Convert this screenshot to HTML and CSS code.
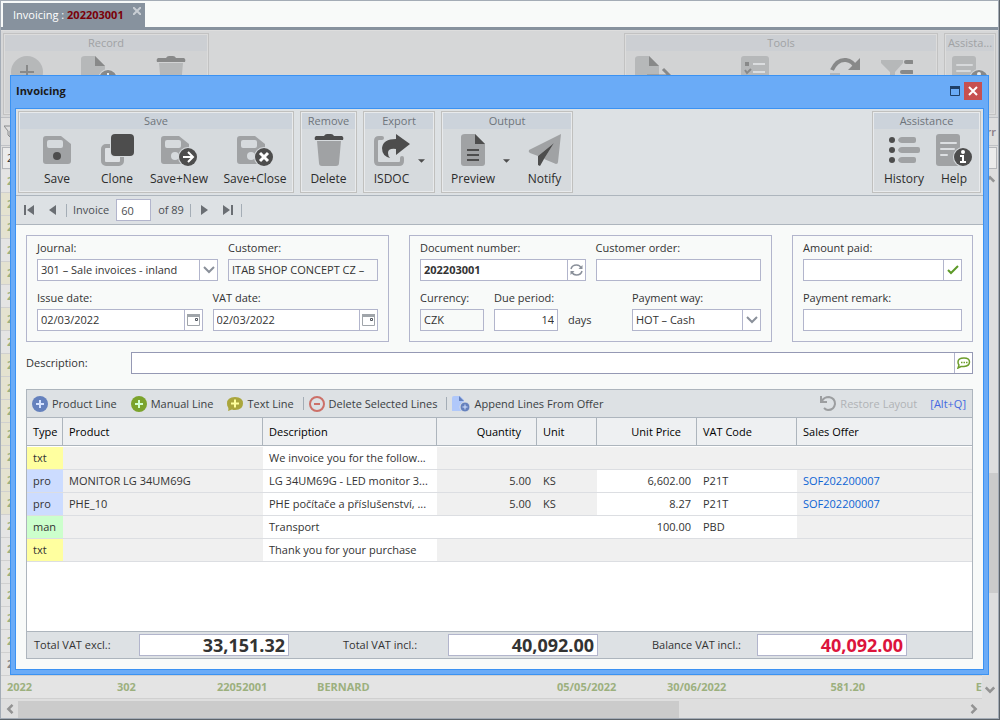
FILE: index.html
```html
<!DOCTYPE html>
<html lang="en">
<head>
  <meta charset="UTF-8">
  <meta name="viewport" content="width=device-width, initial-scale=1.0">
  <title>Invoicing</title>
  <link rel="stylesheet" href="styles.css">
</head>
<body>
  <!-- Shared icons -->
  <svg class="icon-defs" width="0" height="0" aria-hidden="true">
    <symbol id="i-disk" viewBox="0 0 32 32">
      <path fill="#a0a2a4" fill-rule="evenodd" d="M5 2h15l10 8v17q0 3-3 3H5q-3 0-3-3V5q0-3 3-3zM8 6q-2 0-2 2v4q0 2 2 2h12q2 0 2-2V8q0-2-2-2z"/>
    </symbol>
    <symbol id="i-doc" viewBox="0 0 32 32">
      <path fill="#a0a2a4" d="M4 0h10l10 10v19q0 3-3 3H3q-3 0-3-3V3q0-3 4-3z"/>
      <path fill="#4d4d4d" d="M14 0l10 10H14z"/>
    </symbol>
    <symbol id="i-trash" viewBox="0 0 32 32">
      <path fill="#a0a2a4" d="M4 7h24l-2 22q0 3-3 3H9q-3 0-3-3z"/>
      <path fill="#4d4d4d" d="M3 2h8q1-2 3-2h4q2 0 3 2h8q2 1 1 4H2q-1-3 1-4z"/>
    </symbol>
    <symbol id="i-help" viewBox="0 0 36 32">
      <rect width="24" height="32" rx="3" fill="#a0a2a4"/>
      <path stroke="#dcdfe2" stroke-width="2" stroke-linecap="round" d="M5 9h15M5 15h13M5 21h6"/>
      <circle cx="27" cy="23" r="10" fill="#d6dadd"/>
      <circle cx="27" cy="23" r="9" fill="#4d4d4d"/>
      <circle cx="27" cy="18" r="2" fill="#fff"/>
      <path fill="none" stroke="#fff" stroke-width="2" d="M24 22h3v6M24 28h6"/>
    </symbol>
    <symbol id="i-chevron" viewBox="0 0 12 8">
      <path fill="none" stroke="#8a909a" stroke-width="2" d="M1 1l5 5 5-5"/>
    </symbol>
    <symbol id="i-calendar" viewBox="0 0 13 12">
      <path fill="#fff" stroke="#a0a5aa" d="M.5.5h12v11H.5z"/>
      <path fill="#a0a5aa" d="M0 0h13v3H0z"/>
      <path fill="#fff" stroke="#50565e" d="M8.500 4.500h2v2h-2z"/>
    </symbol>
  </svg>

  <!-- Invoice list behind the dialog -->
  <div class="window">
    <div class="tabs">
      <div class="tab">
        <span>Invoicing : <b>202203001</b></span>
        <button class="tab-close" aria-label="Close tab"><svg width="8" height="8" viewBox="0 0 8 8"><path stroke="#c9ced4" stroke-width="2" d="M0 0l8 8M8 0L0 8"/></svg></button>
      </div>
    </div>

    <div class="ribbon back-ribbon">
      <div class="group back-record">
        <h2>Record</h2>
        <div class="back-icons">
          <svg width="32" height="32" viewBox="0 0 32 32"><circle cx="16" cy="16" r="16" fill="#a0a2a4"/><path stroke="#4d4d4d" stroke-width="2" d="M9 16h14M16 9v14"/></svg>
          <svg width="36" height="32" viewBox="0 0 36 32"><use href="#i-doc" width="32" height="32"/><circle cx="27" cy="23" r="10" fill="#dadcde"/><circle cx="27" cy="23" r="9" fill="#4d4d4d"/><path stroke="#fff" stroke-width="2" d="M27 17v11"/></svg>
          <svg width="32" height="32"><use href="#i-trash"/></svg>
        </div>
      </div>
      <div class="group back-tools">
        <h2>Tools</h2>
        <div class="back-icons">
          <svg width="36" height="32" viewBox="0 0 36 32"><use href="#i-doc" width="32" height="32"/><path fill="none" stroke="#4d4d4d" stroke-width="3" d="M12 20h22M28 13l7 7-7 7"/></svg>
          <svg width="28" height="32" viewBox="0 0 28 32"><rect width="28" height="32" rx="3" fill="#a0a2a4"/><rect x="4" y="6" width="4" height="4" fill="#4d4d4d"/><path fill="none" stroke="#4d4d4d" stroke-width="2" d="M4 14l2 3 4-4"/><path stroke="#e4e6e8" stroke-width="2" d="M12 8h12M12 16h12"/></svg>
          <svg width="32" height="32" viewBox="0 0 32 32"><path fill="none" stroke="#4d4d4d" stroke-width="4" d="M3 14Q8 3 17 4q7 1 10 8"/><path fill="#4d4d4d" d="M31 2v12H19z"/><path fill="none" stroke="#a0a2a4" stroke-width="4" d="M1 19h10M29 20Q24 30 16 30"/></svg>
          <svg width="32" height="32" viewBox="0 0 32 32"><path fill="#a0a2a4" d="M0 4h22v3l-8 9v16l-5-4V16L0 7z"/><path stroke="#4d4d4d" stroke-width="4" stroke-linecap="round" d="M25 6h6M21 16h10"/></svg>
        </div>
      </div>
      <div class="group back-assist">
        <h2>Assista...</h2>
        <div class="back-icons"><svg width="36" height="32"><use href="#i-help"/></svg></div>
      </div>
    </div>

    <div class="filter-head">
      <svg width="12" height="14" viewBox="0 0 12 14"><path fill="none" stroke="#8a8c8e" d="M0 1h10L6 6v6L4 10V6z"/></svg>
      <span>urr</span>
    </div>
    <div class="filter-row"><span>2</span></div>

    <div class="list">
      <table class="list-table">
        <tbody>
          <tr><td>2022</td></tr>
          <tr class="open"><td>2022</td></tr>
          <tr class="open"><td>2022</td></tr>
          <tr><td>2022</td></tr>
          <tr class="open"><td>2022</td></tr>
          <tr><td>2022</td></tr>
          <tr class="open"><td>2022</td></tr>
          <tr><td>2022</td></tr>
          <tr class="open"><td>2022</td></tr>
          <tr class="open"><td>2022</td></tr>
          <tr class="open"><td>2022</td></tr>
          <tr class="open"><td>2022</td></tr>
          <tr class="open"><td>2022</td></tr>
          <tr class="open"><td>2022</td></tr>
          <tr class="open"><td>2022</td></tr>
          <tr><td>2022</td></tr>
          <tr><td>2022</td></tr>
          <tr><td>2022</td></tr>
          <tr><td>2022</td></tr>
          <tr><td>2022</td></tr>
          <tr><td>2022</td></tr>
          <tr class="done"><td>2022</td></tr>
          <tr>
            <td class="w-year">2022</td>
            <td class="w-code">302</td>
            <td class="w-code">22052001</td>
            <td class="w-name">BERNARD</td>
            <td class="w-date">05/05/2022</td>
            <td class="w-date">30/06/2022</td>
            <td class="w-sum">581.20</td>
            <td class="w-cur">E</td>
          </tr>
        </tbody>
      </table>
      <div class="vscroll">
        <svg width="10" height="8" viewBox="0 0 12 8"><path fill="none" stroke="#939393" stroke-width="3" d="M1 7l5-5 5 5"/></svg>
        <div class="vthumb"></div>
        <svg width="10" height="8" viewBox="0 0 12 8"><path fill="none" stroke="#939393" stroke-width="3" d="M1 1l5 5 5-5"/></svg>
      </div>
    </div>
    <div class="hscroll">
      <svg width="8" height="10" viewBox="0 0 8 12"><path fill="none" stroke="#939393" stroke-width="3" d="M7 1L2 6l5 5"/></svg>
      <div class="hthumb"></div>
      <svg width="8" height="10" viewBox="0 0 8 12"><path fill="none" stroke="#939393" stroke-width="3" d="M1 1l5 5-5 5"/></svg>
    </div>
  </div>

  <!-- Invoice dialog -->
  <div class="dialog" role="dialog" aria-labelledby="dialogTitle">
    <div class="titlebar">
      <h1 id="dialogTitle">Invoicing</h1>
      <button class="maximize" aria-label="Maximize"><svg width="10" height="10" viewBox="0 0 10 10"><path fill="none" stroke="#1f4068" d="M.5.5h9v9h-9z"/><path fill="#1f4068" d="M0 0h10v3H0z"/></svg></button>
      <button class="close" aria-label="Close"><svg width="10" height="10" viewBox="0 0 10 10"><path stroke="#fff" stroke-width="2" d="M1 1l8 8M9 1L1 9"/></svg></button>
    </div>

    <div class="dialog-inner">
      <div class="ribbon">
        <div class="group">
          <h2>Save</h2>
          <div class="tools">
            <button class="tool w74"><svg width="32" height="32" viewBox="0 0 32 32"><use href="#i-disk"/><circle cx="16" cy="22" r="4" fill="#4d4d4d"/></svg>Save</button>
            <button class="tool w46"><svg width="36" height="32" viewBox="0 0 36 32"><rect x="4" y="12" width="19" height="18" rx="3" fill="#dde0e3" stroke="#a0a2a4" stroke-width="4"/><rect x="11" y="-1" width="25" height="24" rx="4" fill="#d6dadd"/><rect x="12" width="23" height="22" rx="4" fill="#4d4d4d"/></svg>Clone</button>
            <button class="tool w78"><svg width="40" height="32" viewBox="0 0 40 32"><use href="#i-disk" width="32" height="32"/><circle cx="16" cy="22" r="4" fill="#d6dadd"/><circle cx="29" cy="23" r="10" fill="#d6dadd"/><circle cx="29" cy="23" r="9" fill="#4d4d4d"/><path fill="none" stroke="#fff" stroke-width="2" d="M24 23h9M29 18l5 5-5 5"/></svg>Save+New</button>
            <button class="tool w74"><svg width="40" height="32" viewBox="0 0 40 32"><use href="#i-disk" width="32" height="32"/><circle cx="16" cy="22" r="4" fill="#d6dadd"/><circle cx="29" cy="23" r="10" fill="#d6dadd"/><circle cx="29" cy="23" r="9" fill="#4d4d4d"/><path stroke="#fff" stroke-width="3" d="M25 19l8 8M33 19l-8 8"/></svg>Save+Close</button>
          </div>
        </div>
        <div class="group">
          <h2>Remove</h2>
          <div class="tools">
            <button class="tool w53"><svg width="32" height="32"><use href="#i-trash"/></svg>Delete</button>
          </div>
        </div>
        <div class="group">
          <h2>Export</h2>
          <div class="tools">
            <button class="tool w53"><svg width="36" height="32" viewBox="0 0 36 32"><path fill="none" stroke="#a0a2a4" stroke-width="4" stroke-linecap="round" d="M8 4H5Q2 4 2 7v20q0 3 3 3h20q3 0 3-3v-3"/><path fill="#4d4d4d" d="M22 0l14 10-14 11v-6q-8-1-8 4 0 3 2 5-8-2-8-10Q9 5 22 5z"/></svg>ISDOC</button>
            <button class="caret" aria-label="Export options"><svg width="7" height="4" viewBox="0 0 8 4"><path fill="#4d4d4d" d="M0 0h8L4 4z"/></svg></button>
          </div>
        </div>
        <div class="group">
          <h2>Output</h2>
          <div class="tools">
            <button class="tool w60"><svg width="24" height="32" viewBox="0 0 24 32"><use href="#i-doc" width="32" height="32"/><path stroke="#4d4d4d" stroke-width="2" d="M6 16h12M6 21h12M6 26h12"/></svg>Preview</button>
            <button class="caret" aria-label="Preview options"><svg width="7" height="4" viewBox="0 0 8 4"><path fill="#4d4d4d" d="M0 0h8L4 4z"/></svg></button>
            <button class="tool w53"><svg width="34" height="32" viewBox="0 0 34 32"><path fill="#a0a2a4" d="M33 0L1 16q-1 2 1 3l8 3L26 9 16 25l12 5q2 0 2-2z"/><path fill="#4d4d4d" d="M26 9L10 22v9l2 1 4-7z"/></svg>Notify</button>
          </div>
        </div>
        <div class="group assistance push">
          <h2>Assistance</h2>
          <div class="tools">
            <button class="tool w60"><svg width="32" height="32" viewBox="0 0 32 32"><g fill="#4d4d4d"><circle cx="4" cy="6" r="3"/><circle cx="4" cy="16" r="3"/><circle cx="4" cy="26" r="3"/></g><path fill="#a0a2a4" d="M10 6q1-3 4-3h12q2 0 2 2v2q0 2-2 2H14q-3 0-4-3zM10 16q1-3 4-3h16q2 0 2 2v2q0 2-2 2H14q-3 0-4-3zM10 26q1-3 4-3h12q2 0 2 2v2q0 2-2 2H14q-3 0-4-3z"/></svg>History</button>
            <button class="tool w40"><svg width="36" height="32"><use href="#i-help"/></svg>Help</button>
          </div>
        </div>
      </div>

      <div class="navigator">
        <button aria-label="First"><svg width="10" height="10" viewBox="0 0 10 10"><path fill="#6a6e73" d="M0 0h2v10H0zM10 0v10L3 5z"/></svg></button>
        <button aria-label="Previous"><svg width="10" height="10" viewBox="0 0 10 10"><path fill="#6a6e73" d="M8 0v10L1 5z"/></svg></button>
        <i class="sep"></i>
        <label for="position">Invoice</label>
        <input type="text" id="position" value="60">
        <span>of 89</span>
        <i class="sep"></i>
        <button aria-label="Next"><svg width="10" height="10" viewBox="0 0 10 10"><path fill="#6a6e73" d="M0 0v10l7-5z"/></svg></button>
        <button aria-label="Last"><svg width="10" height="10" viewBox="0 0 10 10"><path fill="#6a6e73" d="M8 0h2v10H8zM0 0v10l7-5z"/></svg></button>
        <i class="sep"></i>
      </div>

      <div class="form">
        <div class="boxes">
          <div class="box">
            <div class="row cols-journal">
              <div>
                <label for="journal">Journal:</label>
                <div class="field"><select id="journal"><option>301 – Sale invoices - inland</option></select><span class="addon"><svg width="12" height="8"><use href="#i-chevron"/></svg></span></div>
              </div>
              <div>
                <label for="customer">Customer:</label>
                <div class="field locked"><input type="text" id="customer" value="ITAB SHOP CONCEPT CZ –" readonly></div>
              </div>
            </div>
            <div class="row cols-half">
              <div>
                <label for="issueDate">Issue date:</label>
                <div class="field"><input type="text" id="issueDate" value="02/03/2022"><button class="addon" aria-label="Pick issue date"><svg width="13" height="12"><use href="#i-calendar"/></svg></button></div>
              </div>
              <div>
                <label for="vatDate">VAT date:</label>
                <div class="field"><input type="text" id="vatDate" value="02/03/2022"><button class="addon" aria-label="Pick VAT date"><svg width="13" height="12"><use href="#i-calendar"/></svg></button></div>
              </div>
            </div>
          </div>

          <div class="box">
            <div class="row cols-half">
              <div>
                <label for="docNumber">Document number:</label>
                <div class="field"><input type="text" id="docNumber" class="strong" value="202203001"><button class="addon" aria-label="Renumber"><svg width="13" height="12" viewBox="0 0 13 12"><path fill="none" stroke="#8a909a" stroke-width="1.500" d="M1 5Q2 1 6.500 1 10 1 11 4M12 7q-1 4-5.500 4Q3 11 2 8"/><path fill="#8a909a" d="M12.500 1v4h-4zM.5 11V7h4z"/></svg></button></div>
              </div>
              <div>
                <label for="order">Customer order:</label>
                <div class="field"><input type="text" id="order"></div>
              </div>
            </div>
            <div class="row cols-payment">
              <div>
                <label for="currency">Currency:</label>
                <div class="field locked"><input type="text" id="currency" value="CZK" readonly></div>
              </div>
              <div>
                <label for="due">Due period:</label>
                <div class="field"><input type="text" id="due" class="num" value="14"></div>
              </div>
              <span class="days">days</span>
              <div>
                <label for="payment">Payment way:</label>
                <div class="field"><select id="payment"><option>HOT – Cash</option></select><span class="addon"><svg width="12" height="8"><use href="#i-chevron"/></svg></span></div>
              </div>
            </div>
          </div>

          <div class="box">
            <div class="row">
              <div>
                <label for="paid">Amount paid:</label>
                <div class="field"><input type="text" id="paid"><button class="addon" aria-label="Paid in full"><svg width="12" height="10" viewBox="0 0 12 10"><path fill="none" stroke="#5d9a28" stroke-width="2" d="M1 5l3 3 7-7"/></svg></button></div>
              </div>
            </div>
            <div class="row">
              <div>
                <label for="remark">Payment remark:</label>
                <div class="field"><input type="text" id="remark"></div>
              </div>
            </div>
          </div>
        </div>

        <div class="description">
          <label for="description">Description:</label>
          <div class="field dark"><input type="text" id="description"><button class="addon" aria-label="Note"><svg width="14" height="12" viewBox="0 0 14 12"><path fill="#fff" stroke="#6d9e2c" stroke-width="1.500" d="M7 1q5.500 0 5.500 4T7 9.500q-2 0-3 0L1 11l1-3Q1 7 1 5q0-4 6-4z"/><path stroke="#6d9e2c" stroke-width="1.500" d="M4 5.500h1.500M6.500 5.500H8M9 5.500h1.500"/></svg></button></div>
        </div>

        <div class="lines">
          <div class="lines-toolbar">
            <button><svg width="16" height="16" viewBox="0 0 16 16"><circle cx="8" cy="8" r="8" fill="#6581bd"/><path stroke="#d5e2ff" stroke-width="2" d="M4 8h8M8 4v8"/></svg>Product Line</button>
            <button><svg width="16" height="16" viewBox="0 0 16 16"><circle cx="8" cy="8" r="8" fill="#7ba32c"/><path stroke="#d0ffd0" stroke-width="2" d="M4 8h8M8 4v8"/></svg>Manual Line</button>
            <button><svg width="16" height="16" viewBox="0 0 16 16"><path fill="#aaa63c" d="M8 1q8 0 8 6.500T8 14q-2 0-3-.5L1 15q1-2 0-4-1-1-1-3.500Q0 1 8 1z"/><path stroke="#ffff9c" stroke-width="2" d="M4 7.500h8M8 3.500v8"/></svg>Text Line</button>
            <i class="sep"></i>
            <button><svg width="16" height="16" viewBox="0 0 16 16"><circle cx="8" cy="8" r="7" fill="none" stroke="#cc7068" stroke-width="2"/><path stroke="#cc7068" stroke-width="2" d="M5 8h6"/></svg>Delete Selected Lines</button>
            <i class="sep"></i>
            <button><svg width="18" height="16" viewBox="0 0 18 16"><path fill="#b0c8fa" d="M2 0h6l4 4v11H0V2q0-2 2-2z"/><path fill="#6581bd" d="M7 0l5 5H7z"/><circle cx="13" cy="11" r="5" fill="#6581bd" stroke="#dde1e4"/><path stroke="#d5e2ff" d="M10.500 11h5M13 8.500v5"/></svg>Append Lines From Offer</button>
            <button class="restore" disabled><svg width="16" height="16" viewBox="0 0 16 16"><path fill="none" stroke="#9c9ea0" stroke-width="2" d="M2 5q2-4 7-4 6 1 6 7-1 6-7 6-2 0-4-2M1 0v6h6"/></svg>Restore Layout</button>
            <a href="#" class="shortcut">[Alt+Q]</a>
          </div>
          <div class="lines-grid">
            <table>
              <colgroup>
                <col class="c-type"><col class="c-product"><col class="c-desc"><col class="c-num"><col class="c-unit"><col class="c-num"><col class="c-num"><col>
              </colgroup>
              <thead>
                <tr><th>Type</th><th>Product</th><th>Description</th><th class="num">Quantity</th><th>Unit</th><th class="num">Unit Price</th><th>VAT Code</th><th>Sales Offer</th></tr>
              </thead>
              <tbody>
                <tr><td class="txt">txt</td><td class="off"></td><td>We invoice you for the follow...</td><td class="off"></td><td class="off"></td><td class="off"></td><td class="off"></td><td class="off"></td></tr>
                <tr><td class="pro">pro</td><td class="off">MONITOR LG 34UM69G</td><td>LG 34UM69G - LED monitor 3...</td><td class="off num">5.00</td><td class="off">KS</td><td class="num">6,602.00</td><td>P21T</td><td class="off"><a href="#">SOF202200007</a></td></tr>
                <tr><td class="pro">pro</td><td class="off">PHE_10</td><td>PHE počítače a příslušenství, ...</td><td class="off num">5.00</td><td class="off">KS</td><td class="num">8.27</td><td>P21T</td><td class="off"><a href="#">SOF202200007</a></td></tr>
                <tr><td class="man">man</td><td class="off"></td><td>Transport</td><td></td><td></td><td class="num">100.00</td><td>PBD</td><td class="off"></td></tr>
                <tr><td class="txt">txt</td><td class="off"></td><td>Thank you for your purchase</td><td class="off"></td><td class="off"></td><td class="off"></td><td class="off"></td><td class="off"></td></tr>
              </tbody>
            </table>
          </div>
          <div class="totals">
            <div class="total"><label for="totalExcl">Total VAT excl.:</label><input type="text" id="totalExcl" value="33,151.32" readonly></div>
            <div class="total"><label for="totalIncl">Total VAT incl.:</label><input type="text" id="totalIncl" value="40,092.00" readonly></div>
            <div class="total"><label for="balance">Balance VAT incl.:</label><input type="text" id="balance" class="unpaid" value="40,092.00" readonly></div>
          </div>
        </div>
      </div>
    </div>
  </div>
</body>
</html>
```
FILE: styles.css
```css
* {
  margin: 0;
  padding: 0;
  box-sizing: border-box;
}

body {
  font-family: 'Open Sans', 'Noto Sans', sans-serif;
  font-size: 11px;
  line-height: 16px;
  color: #333;
  background: #5c636a;
  height: 100vh;
  position: relative;
  overflow: hidden;
}

button,
input,
select {
  font: inherit;
  color: inherit;
  border: none;
  background: none;
  border-radius: 0;
  outline: none;
}

button,
select {
  cursor: pointer;
}

svg {
  display: block;
  flex: none;
}

a {
  color: #0c64d4;
  text-decoration: none;
}

.icon-defs {
  position: absolute;
}

.push {
  margin-left: auto;
}

/* Window behind */
.window {
  height: calc(100% - 1px);
  margin-right: 1px;
  display: flex;
  flex-direction: column;
  background: #dedede;
  border: 1px solid #a4acb6;
}

.tabs {
  display: flex;
  padding: 2px 2px 0;
  background: #f8faf9;
  border-bottom: 3px solid #87929e;
}

.tab {
  display: flex;
  height: 24px;
  width: 142px;
  padding-left: 10px;
  align-items: center;
  justify-content: space-between;
  background: #87929e;
  color: #fff;
}

.tab b {
  color: #7a0008;
}

.tab-close {
  align-self: flex-start;
  padding: 4px;
}

.ribbon {
  display: flex;
  gap: 6px;
  padding: 2px;
  background: #dde1e4;
  border-bottom: 1px solid #adb5bd;
}

.group {
  height: 82px;
  padding: 1px;
  border: 1px solid #c0c0be;
  background: #d6dadd;
  box-shadow: inset 0 0 0 1px #e8eaec;
}

.group h2 {
  height: 16px;
  font-size: 11px;
  font-weight: 400;
  text-align: center;
  color: #6e747a;
  background: #ccd3db;
}

.back-ribbon {
  margin-top: 1px;
  background: #d6d7d8;
  border-color: #bcbec2;
}

.back-ribbon .group {
  background: #d2d3d4;
  border-color: #c2c2c2;
  box-shadow: inset 0 0 0 1px #dcdcdc;
}

.back-ribbon h2 {
  color: #a0a2a4;
  background: #cccfd3;
}

.back-record {
  width: 206px;
}

.back-tools {
  width: 314px;
  margin-left: auto;
}

.back-assist {
  width: 52px;
}

.back-icons {
  display: flex;
  justify-content: space-between;
  padding: 5px 6px 0;
  overflow: hidden;
  opacity: 0.55;
}

.back-record .back-icons {
  padding-right: 20px;
}

.back-tools .back-icons {
  justify-content: flex-start;
  gap: 20px;
  padding-left: 9px;
}

.back-tools svg:nth-child(2) {
  margin-left: 50px;
}

.back-tools svg:nth-child(3) {
  margin-left: 40px;
}

.filter-head {
  display: flex;
  justify-content: space-between;
  align-items: center;
  height: 28px;
  padding: 0 2px 0 3px;
  color: #887a86;
  font-weight: 600;
  border-bottom: 1px solid #c0c2c6;
}

.filter-row {
  height: 22px;
  margin: 1px;
  padding: 2px 4px;
  background: #ebebeb;
  border: 1px solid #b4b6ba;
}

.list {
  flex: 1;
  min-height: 0;
  display: flex;
}

.list-table {
  flex: 1;
  border-spacing: 0;
  height: 100%;
}

.list-table tbody {
  display: block;
  overflow: hidden;
}

.list-table tr {
  display: flex;
  height: 23px;
  background: #e4e4e4;
  border-bottom: 1px solid #d0d0d0;
}

.list-table tr.open {
  background: #e4e2d0;
}

.list-table tr.done td {
  color: #888;
}

.list-table td {
  padding: 3px 6px;
  font-weight: 700;
  color: #9cb07e;
}

.w-year {
  width: 110px;
}

.w-code {
  width: 100px;
}

.w-name {
  width: 240px;
}

.w-date {
  width: 110px;
}

.w-sum {
  width: 100px;
  text-align: right;
}

.w-cur {
  flex: 1;
  text-align: right;
  overflow: hidden;
}

.list-table .w-cur {
  padding-right: 0;
}

.vscroll {
  display: flex;
  flex-direction: column;
  align-items: center;
  justify-content: space-between;
  width: 16px;
  padding: 5px 0 6px;
}

.vthumb {
  width: 16px;
  height: 120px;
  margin-top: 196px;
  background: #cbcbcb;
}

.hscroll {
  display: flex;
  align-items: center;
  gap: 4px;
  height: 18px;
  padding: 0 20px 0 5px;
}

.hthumb {
  width: 68%;
  height: 17px;
  margin-right: auto;
  background: #cbcbcb;
}

/* Dialog */
.dialog {
  position: absolute;
  top: 75px;
  left: 10px;
  right: 11px;
  bottom: 45px;
  display: flex;
  flex-direction: column;
  padding: 0 4px 4px;
  background: #6aabf7;
  border: 1px solid #3b92f2;
}

.titlebar {
  display: flex;
  align-items: center;
  gap: 4px;
  height: 32px;
  padding: 0 2px 2px 1px;
}

.titlebar h1 {
  flex: 1;
  font-size: 11px;
  font-weight: 700;
  color: #1a1a1a;
}

.titlebar button {
  display: flex;
  align-items: center;
  justify-content: center;
  height: 18px;
}

.titlebar .close {
  width: 18px;
  background: #c75050;
}

.dialog-inner {
  flex: 1;
  min-height: 0;
  display: flex;
  flex-direction: column;
  border: 1px solid #3b92f2;
  background: #f8faf9;
}

.tools {
  display: flex;
  padding-top: 5px;
}

.assistance .tools {
  padding-right: 5px;
}

.tool {
  display: flex;
  flex-direction: column;
  align-items: center;
  gap: 5px;
  font-size: 12px;
  white-space: nowrap;
  color: #2c2c2c;
}

.w40 { width: 40px; }
.w46 { width: 46px; }
.w53 { width: 53px; }
.w60 { width: 60px; }
.w74 { width: 74px; }
.w78 { width: 78px; }

.caret {
  display: flex;
  align-items: center;
  width: 15px;
}

.navigator {
  display: flex;
  align-items: center;
  gap: 6px;
  height: 29px;
  padding-left: 8px;
  background: #dde1e4;
  border-bottom: 1px solid #adb5bd;
  color: #4a4e52;
}

.navigator button {
  width: 12px;
}

.navigator button:first-child {
  margin-right: 6px;
}

.navigator input ~ button {
  margin-left: 4px;
}

.navigator input {
  width: 35px;
  height: 22px;
  margin: 0 1px;
  padding: 0 4px;
  background: #fff;
  border: 1px solid #b2b5cc;
}

.sep {
  width: 1px;
  height: 13px;
  background: #a4adb6;
}

/* Form */
.form {
  flex: 1;
  min-height: 0;
  display: flex;
  flex-direction: column;
  padding: 10px;
}

.boxes {
  display: grid;
  grid-template-columns: 363fr 363fr 181fr;
  gap: 20px;
}

.box {
  display: flex;
  flex-direction: column;
  gap: 9px;
  padding: 4px 10px 10px;
  border: 1px solid #b2b5cc;
}

.row {
  display: grid;
  gap: 10px;
}

.row > div {
  min-width: 0;
}

.cols-journal {
  grid-template-columns: 181fr 150fr;
}

.cols-half {
  grid-template-columns: 1fr 1fr;
}

.cols-payment {
  grid-template-columns: 64fr 64fr 54fr 129fr;
}

.row label {
  display: block;
  height: 19px;
  white-space: nowrap;
}

.days {
  align-self: end;
  line-height: 22px;
}

.field {
  display: flex;
  height: 22px;
  background: #fff;
  border: 1px solid #b2b5cc;
}

.field.locked {
  background: #f8faf9;
}

.field.dark {
  border-color: #9599b4;
}

.field input,
.field select {
  flex: 1;
  min-width: 0;
  padding: 0 3px;
  appearance: none;
}

.strong {
  font-weight: 700;
}

.addon {
  display: flex;
  align-items: center;
  justify-content: center;
  width: 18px;
  border-left: 1px solid #b2b5cc;
  pointer-events: none;
}

button.addon {
  pointer-events: auto;
}

.description {
  display: flex;
  align-items: center;
  margin: 10px 0 15px;
}

.description label {
  width: 105px;
}

.description .field {
  flex: 1;
}

/* Invoice lines */
.lines {
  flex: 1;
  min-height: 0;
  display: flex;
  flex-direction: column;
  border: 1px solid #adb5bd;
  background: #fff;
}

.lines-toolbar {
  display: flex;
  align-items: center;
  height: 28px;
  padding: 0 6px 0 5px;
  background: #dde1e4;
  border-bottom: 1px solid #adb5bd;
}

.lines-toolbar button {
  display: flex;
  align-items: center;
  gap: 4px;
  white-space: nowrap;
  color: #3a3e42;
}

.lines-toolbar button + button {
  margin-left: 14px;
}

.lines-toolbar .sep {
  margin: 0 5px 0 9px;
}

.lines-toolbar button.restore {
  margin-left: auto;
  color: #b0b3b6;
  cursor: default;
}

.shortcut {
  margin-left: 13px;
  color: #4468e0;
}

.num {
  text-align: right;
}

.lines-grid {
  flex: 1;
  min-height: 0;
  overflow: hidden;
}

.lines-grid table {
  width: 100%;
  table-layout: fixed;
  border-spacing: 0;
}

.c-type { width: 36px; }
.c-product { width: 200px; }
.c-desc { width: 174px; }
.c-num { width: 100px; }
.c-unit { width: 60px; }

.lines-grid th {
  height: 28px;
  padding: 0 6px;
  font-weight: 400;
  text-align: left;
  color: #000;
  background: #eef0f2;
  border-right: 1px solid #adb5bd;
  border-bottom: 1px solid #adb5bd;
}

.lines-grid th:last-child {
  border-right: none;
}

.lines-grid th.num {
  padding-right: 15px;
  text-align: right;
}

.lines-grid td {
  height: 23px;
  padding: 0 6px;
  overflow: hidden;
  white-space: nowrap;
  border-bottom: 1px solid #dcdee2;
}

.lines-grid tbody tr:first-child td {
  height: 24px;
  border-top: 1px solid #fff;
}

.lines-grid .off { background: #f0f0f0; }
.lines-grid .txt { background: #ffff9f; }
.lines-grid .pro { background: #ccdcff; }
.lines-grid .man { background: #ccffcc; }

.totals {
  display: flex;
  gap: 54px;
  padding: 2px 7px;
  background: #dde1e4;
  border-top: 1px solid #adb5bd;
}

.total {
  display: flex;
  align-items: center;
}

.total label {
  width: 105px;
}

.total input {
  width: 150px;
  height: 22px;
  padding: 0 3px;
  font-size: 18px;
  font-weight: 700;
  text-align: right;
  background: #fff;
  border: 1px solid #b2b5cc;
}

.total .unpaid {
  color: #dc143c;
}
```
